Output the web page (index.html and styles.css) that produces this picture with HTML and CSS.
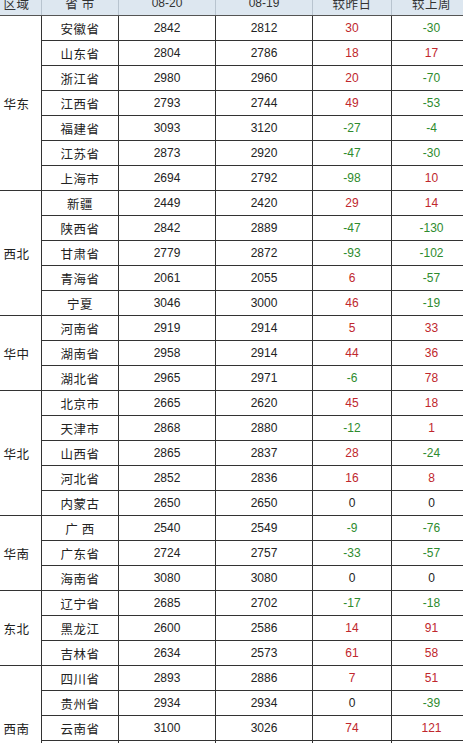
FILE: index.html
```html
<!DOCTYPE html>
<html lang="zh-CN">
<head>
<meta charset="utf-8">
<title>价格表</title>
<link rel="stylesheet" href="styles.css">
</head>
<body>
<div class="wrap">
<table class="price">
<colgroup>
<col class="c-region"><col class="c-prov"><col class="c-d1"><col class="c-d2"><col class="c-day"><col class="c-week">
</colgroup>
<thead>
<tr><th class="zh">区域</th><th class="zh">省 市</th><th>08-20</th><th>08-19</th><th class="zh">较昨日</th><th class="zh">较上周</th></tr>
</thead>
<tbody>
<tr class="grp"><td class="region" rowspan="7">华东</td><td class="zh">安徽省</td><td>2842</td><td>2812</td><td class="up">30</td><td class="dn">-30</td></tr>
<tr><td class="zh">山东省</td><td>2804</td><td>2786</td><td class="up">18</td><td class="up">17</td></tr>
<tr><td class="zh">浙江省</td><td>2980</td><td>2960</td><td class="up">20</td><td class="dn">-70</td></tr>
<tr><td class="zh">江西省</td><td>2793</td><td>2744</td><td class="up">49</td><td class="dn">-53</td></tr>
<tr><td class="zh">福建省</td><td>3093</td><td>3120</td><td class="dn">-27</td><td class="dn">-4</td></tr>
<tr><td class="zh">江苏省</td><td>2873</td><td>2920</td><td class="dn">-47</td><td class="dn">-30</td></tr>
<tr><td class="zh">上海市</td><td>2694</td><td>2792</td><td class="dn">-98</td><td class="up">10</td></tr>

<tr class="grp"><td class="region" rowspan="5">西北</td><td class="zh">新疆</td><td>2449</td><td>2420</td><td class="up">29</td><td class="up">14</td></tr>
<tr><td class="zh">陕西省</td><td>2842</td><td>2889</td><td class="dn">-47</td><td class="dn">-130</td></tr>
<tr><td class="zh">甘肃省</td><td>2779</td><td>2872</td><td class="dn">-93</td><td class="dn">-102</td></tr>
<tr><td class="zh">青海省</td><td>2061</td><td>2055</td><td class="up">6</td><td class="dn">-57</td></tr>
<tr><td class="zh">宁夏</td><td>3046</td><td>3000</td><td class="up">46</td><td class="dn">-19</td></tr>

<tr class="grp"><td class="region" rowspan="3">华中</td><td class="zh">河南省</td><td>2919</td><td>2914</td><td class="up">5</td><td class="up">33</td></tr>
<tr><td class="zh">湖南省</td><td>2958</td><td>2914</td><td class="up">44</td><td class="up">36</td></tr>
<tr><td class="zh">湖北省</td><td>2965</td><td>2971</td><td class="dn">-6</td><td class="up">78</td></tr>

<tr class="grp"><td class="region" rowspan="5">华北</td><td class="zh">北京市</td><td>2665</td><td>2620</td><td class="up">45</td><td class="up">18</td></tr>
<tr><td class="zh">天津市</td><td>2868</td><td>2880</td><td class="dn">-12</td><td class="up">1</td></tr>
<tr><td class="zh">山西省</td><td>2865</td><td>2837</td><td class="up">28</td><td class="dn">-24</td></tr>
<tr><td class="zh">河北省</td><td>2852</td><td>2836</td><td class="up">16</td><td class="up">8</td></tr>
<tr><td class="zh">内蒙古</td><td>2650</td><td>2650</td><td>0</td><td>0</td></tr>

<tr class="grp"><td class="region" rowspan="3">华南</td><td class="zh">广 西</td><td>2540</td><td>2549</td><td class="dn">-9</td><td class="dn">-76</td></tr>
<tr><td class="zh">广东省</td><td>2724</td><td>2757</td><td class="dn">-33</td><td class="dn">-57</td></tr>
<tr><td class="zh">海南省</td><td>3080</td><td>3080</td><td>0</td><td>0</td></tr>

<tr class="grp"><td class="region" rowspan="3">东北</td><td class="zh">辽宁省</td><td>2685</td><td>2702</td><td class="dn">-17</td><td class="dn">-18</td></tr>
<tr><td class="zh">黑龙江</td><td>2600</td><td>2586</td><td class="up">14</td><td class="up">91</td></tr>
<tr><td class="zh">吉林省</td><td>2634</td><td>2573</td><td class="up">61</td><td class="up">58</td></tr>

<tr class="grp"><td class="region" rowspan="5">西南</td><td class="zh">四川省</td><td>2893</td><td>2886</td><td class="up">7</td><td class="up">51</td></tr>
<tr><td class="zh">贵州省</td><td>2934</td><td>2934</td><td>0</td><td class="dn">-39</td></tr>
<tr><td class="zh">云南省</td><td>3100</td><td>3026</td><td class="up">74</td><td class="up">121</td></tr>
<tr><td class="zh">重庆市</td><td>2980</td><td>2960</td><td class="up">20</td><td class="up">35</td></tr>
<tr><td class="zh">西藏</td><td>3150</td><td>3150</td><td>0</td><td>0</td></tr>
</tbody>
</table>
</div>
</body>
</html>
```
FILE: styles.css
```css
html, body {
  margin: 0;
  padding: 0;
  background: #ffffff;
  overflow: hidden;
}
.wrap {
  margin-top: -10px;
  margin-left: -9px;
  width: 480px;
}
.price {
  border-collapse: collapse;
  table-layout: fixed;
  width: 480px;
  font-family: "Liberation Sans", "Noto Sans CJK SC", sans-serif;
  font-size: 12px;
  color: #222;
}
.c-region { width: 50px; }
.c-prov { width: 77px; }
.c-d1 { width: 97px; }
.c-d2 { width: 97px; }
.c-day { width: 79px; }
.c-week { width: 80px; }

.price th {
  height: 24px;
  padding: 0;
  background: #dde7f0;
  border: 1px solid #b8c4cf;
  border-bottom: 1px solid #555;
  font-weight: normal;
  color: #333;
  text-align: center;
}
.price td {
  height: 24px;
  padding: 0;
  border: 1px solid #333;
  text-align: center;
  vertical-align: middle;
}
.price .zh {
  font-family: "Noto Sans CJK SC", sans-serif;
  font-size: 12.5px;
  letter-spacing: 0.5px;
}
.price td.region {
  font-family: "Noto Sans CJK SC", sans-serif;
  font-size: 12.5px;
  letter-spacing: 0.5px;
  color: #222;
}
.price .up { color: #c0272d; }
.price .dn { color: #2e8b2e; }
```
